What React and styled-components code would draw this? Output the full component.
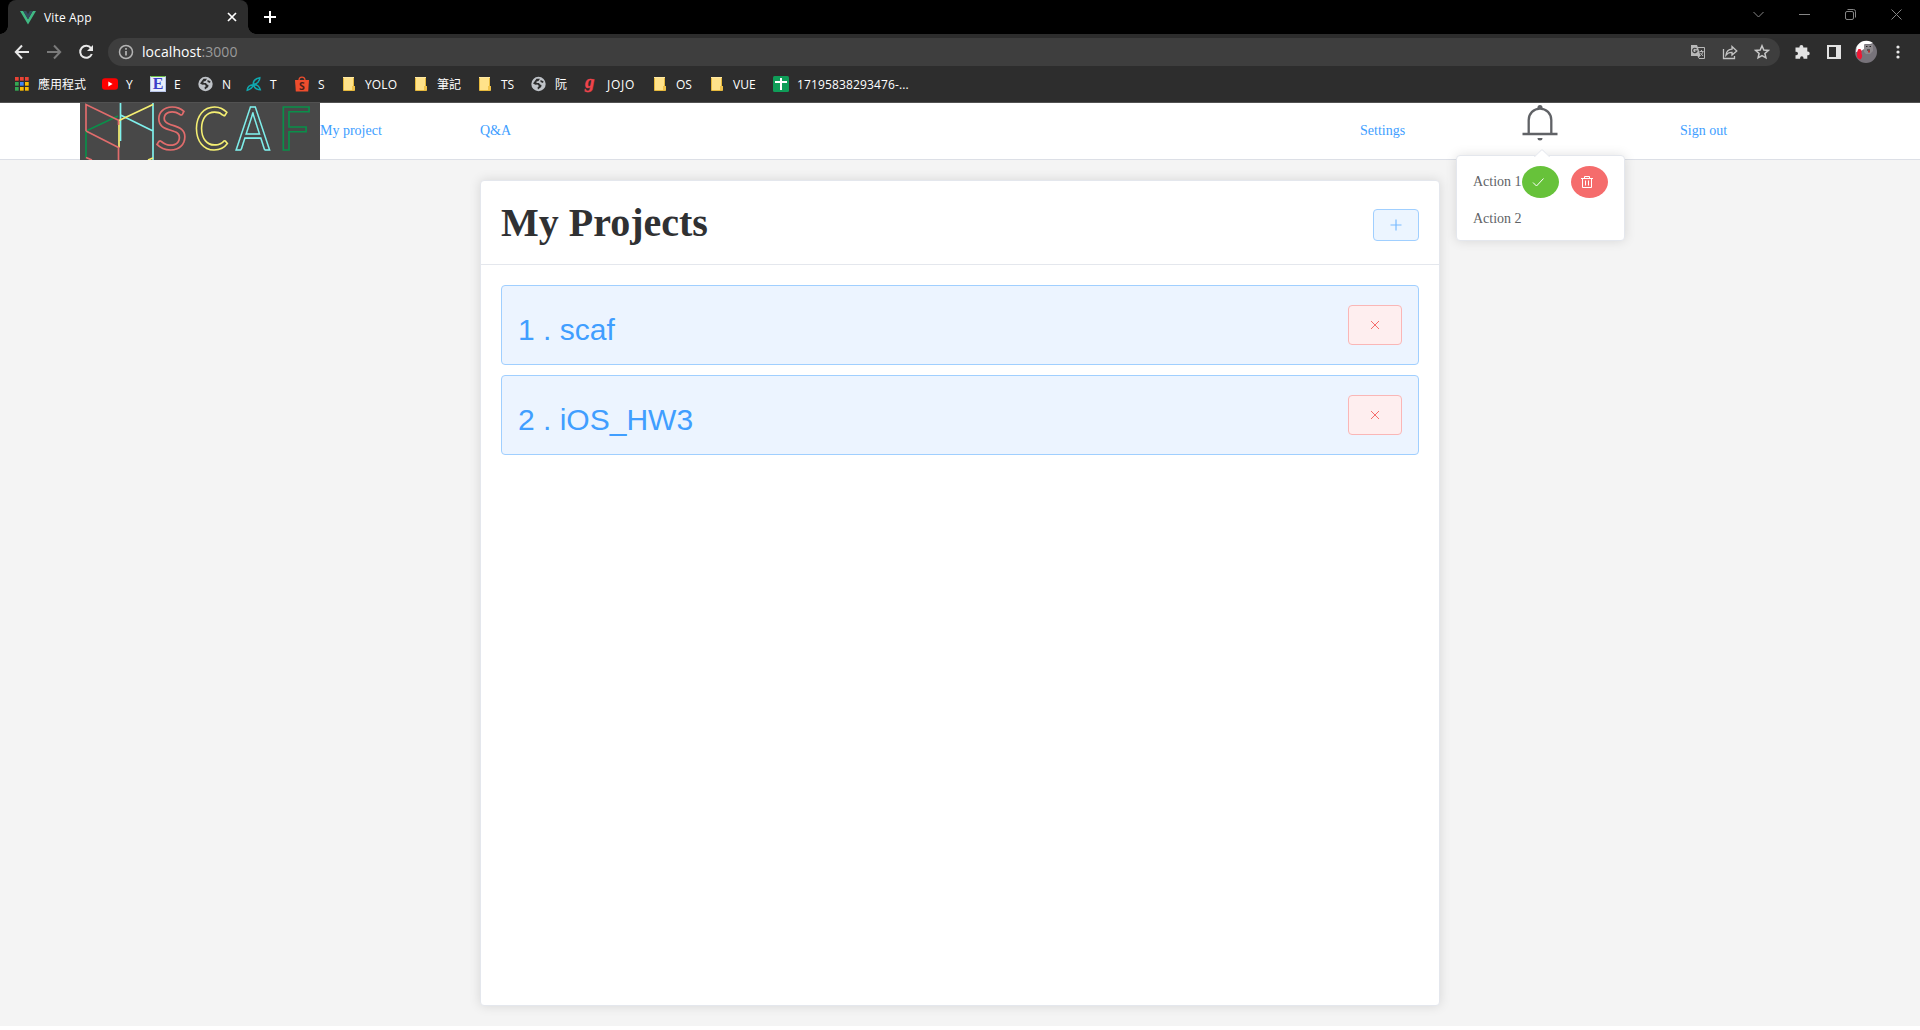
import React from "react";
import styled, { createGlobalStyle, css } from "styled-components";

const Global = createGlobalStyle`
  * { box-sizing: border-box; }
  body { margin: 0; background: #fff; overflow: hidden; }
  svg { display: block; flex: none; }
`;

const ui = css`
  font-family: "Open Sans", "Noto Sans", "Noto Sans CJK TC", sans-serif;
`;

/* ---------- browser chrome ---------- */
const Window = styled.div`
  width: 1920px;
  height: 1030px;
  display: flex;
  flex-direction: column;
`;
const TabStrip = styled.div`
  ${ui}
  height: 34px;
  flex: none;
  background: #000;
  display: flex;
  padding: 0 1px 0 8px;
`;
const Tab = styled.div`
  position: relative;
  width: 240px;
  height: 34px;
  border-radius: 8px 8px 0 0;
  background: #2d2d2d;
  color: #fff;
  font-size: 12px;
  display: flex;
  align-items: center;
  padding: 0 11px 0 12px;
  &::before, &::after {
    content: "";
    position: absolute;
    bottom: 0;
    width: 8px;
    height: 8px;
  }
  &::before { left: -8px; background: radial-gradient(circle at 0 0, transparent 7.5px, #2d2d2d 8px); }
  &::after { right: -8px; background: radial-gradient(circle at 100% 0, transparent 7.5px, #2d2d2d 8px); }
`;
const TabTitle = styled.span`
  flex: 1;
  margin-left: 8px;
  padding-top: 1px;
  letter-spacing: 0.15px;
`;
const NewTab = styled.div`
  margin: 11px 0 0 16px;
`;
const WindowButtons = styled.div`
  margin-left: auto;
  display: flex;
  height: 28px;
  align-items: center;
`;
const WindowButton = styled.div`
  width: 46px;
  display: flex;
  justify-content: center;
`;
const Toolbar = styled.div`
  ${ui}
  height: 34px;
  flex: none;
  background: #2d2d2d;
  display: flex;
  align-items: center;
  padding: 2px 14px 0;
`;
const NavIcons = styled.div`
  display: flex;
  gap: 16px;
  width: 94px;
`;
const Address = styled.div`
  flex: none;
  width: 1672px;
  height: 28px;
  border-radius: 14px;
  background: #3e3e3e;
  display: flex;
  align-items: center;
  padding: 0 10px 0 10px;
  color: #fff;
  font-size: 14px;
`;
const Url = styled.span`
  flex: 1;
  margin-left: 8px;
  padding-bottom: 1px;
  letter-spacing: 0.08px;
`;
const Port = styled.span`
  color: #9a9a9a;
`;
const AddressIcons = styled.div`
  display: flex;
  gap: 16px;
`;
const Extensions = styled.div`
  display: flex;
  align-items: center;
  padding-left: 14px;
`;
const ExtSlot = styled.div`
  width: ${(p) => p.$w}px;
  display: flex;
`;
const Bookmarks = styled.div`
  ${ui}
  height: 35px;
  flex: none;
  background: #2d2d2d;
  border-bottom: 1px solid #525252;
  display: flex;
  align-items: center;
  padding: 0 0 2px 14px;
`;
const Bookmark = styled.div`
  width: ${(p) => p.$w}px;
  height: 24px;
  flex: none;
  display: flex;
  align-items: center;
  gap: 8px;
  color: #fff;
  font-size: 12px;
  letter-spacing: ${(p) => p.$ls || 0}px;
  white-space: nowrap;
`;

/* ---------- page ---------- */
const Page = styled.div`
  flex: 1;
  display: flex;
  flex-direction: column;
  font-family: "Liberation Serif", serif;
`;
const NavBar = styled.nav`
  height: 57px;
  flex: none;
  border-bottom: 1px solid #dcdfe6;
  padding: 0 80px;
  display: grid;
  grid-template-columns: 240px 160px 880px 160px 160px 160px;
  font-size: 14px;
  color: #409eff;
`;
const NavLink = styled.a`
  line-height: 56px;
`;
const BellSlot = styled.div`
  position: relative;
`;
const BellIcon = styled.svg`
  margin-top: -1px;
`;
const Logo = styled.div`
  height: 57px;
  background: #484848;
  display: flex;
`;
const Word = styled.div`
  font-family: Lato, sans-serif;
  font-size: 60px;
  line-height: 48px;
  display: flex;
  color: #484848;
`;
const Letter = styled.span`
  width: ${(p) => p.$w}px;
  height: 48px;
  transform: scaleX(${(p) => p.$sx || 1});
  transform-origin: 0 0;
  -webkit-text-stroke: 1.7px ${(p) => p.$c};
`;
const Menu = styled.div`
  position: absolute;
  z-index: 2;
  left: -64px;
  top: 52px;
  width: 169px;
  height: 86px;
  background: #fff;
  border: 1px solid #e4e7ed;
  border-radius: 4px;
  box-shadow: 0 0 12px rgba(0, 0, 0, 0.12);
  color: #606266;
  padding: 7px 0 0 16px;
  &::before {
    content: "";
    position: absolute;
    left: 79px;
    top: -5px;
    width: 10px;
    height: 10px;
    background: #fff;
    transform: rotate(45deg);
    border: 1px solid #e4e7ed;
    border-color: #e4e7ed transparent transparent #e4e7ed;
    border-top-left-radius: 2px;
  }
`;
const MenuRow = styled.div`
  height: ${(p) => p.$h}px;
  display: flex;
  align-items: center;
  white-space: nowrap;
`;
const RowLabel = styled.span`
  width: 49px;
  padding-top: 1px;
`;
const RoundButton = styled.div`
  width: 37px;
  height: 32px;
  border-radius: 50%;
  background: ${(p) => p.$bg};
  margin-right: 12px;
  padding-left: 9px;
  display: flex;
  align-items: center;
`;
const Main = styled.main`
  height: 866px;
  flex: none;
  background: #f4f4f4;
  padding-top: 20px;
`;
const Card = styled.section`
  width: 960px;
  height: 826px;
  margin: 0 auto;
  background: #fff;
  border: 1px solid #e4e7ed;
  border-radius: 4px;
  box-shadow: 0 0 12px rgba(0, 0, 0, 0.12);
`;
const CardHeader = styled.header`
  height: 84px;
  padding: 0 20px;
  border-bottom: 1px solid #e4e7ed;
  display: flex;
  justify-content: space-between;
`;
const Title = styled.h1`
  margin: 19px 0 0;
  font-size: 40px;
  line-height: 46px;
  color: #303133;
`;
const AddButton = styled.div`
  width: 46px;
  height: 32px;
  margin-top: 28px;
  border: 1px solid #a0cfff;
  border-radius: 4px;
  background: #ecf5ff;
  display: flex;
  align-items: center;
  justify-content: center;
`;
const List = styled.div`
  padding: 20px;
  display: flex;
  flex-direction: column;
  gap: 10px;
`;
const Project = styled.div`
  height: 80px;
  border: 1px solid #a0cfff;
  border-radius: 4px;
  background: #ecf4ff;
  display: flex;
  justify-content: space-between;
  padding: 19px 16px 0 16px;
  font-family: "Liberation Sans", Arial, sans-serif;
  font-size: 30px;
  color: #409eff;
`;
const ProjectName = styled.span`
  line-height: 34px;
  padding-top: 8px;
`;
const DeleteButton = styled.div`
  width: 54px;
  height: 40px;
  border: 1px solid #fab6b6;
  border-radius: 4px;
  background: #feeeef;
  display: flex;
  align-items: center;
  justify-content: center;
`;

/* ---------- icons ---------- */
const Folder = () => (
  <svg width="16" height="16">
    <path d="M2.5 1.5h10v9h1v4h-11z" fill="#ffe28a" stroke="#e6b93c" />
    <path d="M2 1h11v1H2z" fill="#ffe9a3" />
    <path d="M11 10h3v4h-3z" fill="#f0c24b" />
  </svg>
);
const Globe = () => (
  <svg width="16" height="16">
    <circle cx="7.500" cy="8" r="7.200" fill="#bfc3c8" />
    <path d="M2 7.500l3.500-4.800h3.500l-1.500 2.300-2 .5v1.500H8l1 1.500 1.500.5-.3 2-3.200 2.500-.5-2 1.500-1.500-1.500-1.500-2 .3z" fill="#2d2d2d" />
    <path d="M9.500 4l3 1.200-.5 1.800-2.500-1z" fill="#2d2d2d" />
  </svg>
);
const APPS = ["#ea4335", "#ea4335", "#ea4335", "#34a853", "#4285f4", "#fbbc04", "#34a853", "#fbbc04", "#fbbc04"];
const Apps = () => (
  <svg width="16" height="16">
    {APPS.map((c, i) => (
      <rect key={i} x={1 + (i % 3) * 5} y={1 + Math.floor(i / 3) * 5} width="3.700" height="3.700" fill={c} />
    ))}
  </svg>
);
const YouTube = () => (
  <svg width="16" height="16">
    <rect y="2.300" width="16" height="11.400" rx="3" fill="#f00" />
    <path d="M6.300 5.500v5l4.300-2.500z" fill="#fff" />
  </svg>
);
const Squares = styled.span`
  width: 16px;
  height: 16px;
  flex: none;
  display: block;
  text-align: center;
  letter-spacing: 0;
  background: #e7effb;
  border: 1px solid #b8c4e8;
  border-top-color: #69bd45;
  color: #3b3ec8;
  font: bold 16px/14px "Liberation Serif", serif;
`;
const Branch = () => (
  <svg width="16" height="16" fill="none" stroke="#10a7ae" strokeWidth="1.500">
    <path d="M7.300 8.500C7 5 9.500 2.500 13.800 1.700 14 5 11 8 7.300 8.500zM7.300 8.800C6.500 11.800 4 13.500 1.200 14.200 1.500 11 4 9 7.300 8.800zM7.500 8.800c3.500-.3 6 2 6.800 5-3.500 0-6-1.800-6.800-5z" />
  </svg>
);
const Shop = () => (
  <svg width="16" height="16">
    <path d="M1 4h14l-.8 11.500H1.800z" fill="#ee4d2d" />
    <path d="M5 4.300C5 0 11 0 11 4.300" fill="none" stroke="#ee4d2d" strokeWidth="1.300" />
    <text x="8" y="13.500" fontSize="10.500" fontWeight="bold" textAnchor="middle" fill="#4b211a">S</text>
  </svg>
);
const Script = styled.span`
  width: 16px;
  height: 16px;
  flex: none;
  color: #f0444c;
  font: italic bold 19px/11px "Liberation Serif", serif;
  -webkit-text-stroke: 0.4px #f0444c;
  padding-left: 2px;
`;
const Sheet = () => (
  <svg width="16" height="16">
    <rect width="16" height="16" rx="1.500" fill="#0f9d58" />
    <path d="M2 5h12v2H2zM7 2h2v12H7z" fill="#fff" />
  </svg>
);

const BOOKMARKS = [
  [<Apps />, "應用程式", 88],
  [<YouTube />, "Y", 48],
  [<Squares>E</Squares>, "E", 48],
  [<Globe />, "N", 48],
  [<Branch />, "T", 48],
  [<Shop />, "S", 47],
  [<Folder />, "YOLO", 72, 0.15],
  [<Folder />, "筆記", 64],
  [<Folder />, "TS", 54],
  [<Globe />, "阮", 52],
  [<Script>g</Script>, "JOJO", 69, 0.7],
  [<Folder />, "OS", 57],
  [<Folder />, "VUE", 64],
  [<Sheet />, "17195838293476-...", 140, 0.14],
];
const PROJECTS = ["scaf", "iOS_HW3"];

const Chrome = () => (
  <>
    <TabStrip>
      <Tab>
        <svg width="16" height="16">
          <path d="M0 2h3.200L8 10.300 12.800 2H16L8 15.500z" fill="#41b883" />
          <path d="M3.200 2h3L8 5.200 9.800 2h3L8 10.300z" fill="#35495e" />
        </svg>
        <TabTitle>Vite App</TabTitle>
        <svg width="10" height="10" stroke="#fff" strokeWidth="1.700">
          <path d="M1 1l8 8M9 1l-8 8" />
        </svg>
      </Tab>
      <NewTab>
        <svg width="12" height="12" stroke="#fff" strokeWidth="2">
          <path d="M6 0v12M0 6h12" />
        </svg>
      </NewTab>
      <WindowButtons>
        <WindowButton>
          <svg width="11" height="11" fill="none" stroke="#858585"><path d="M.5 3l5 5 5-5" /></svg>
        </WindowButton>
        <WindowButton>
          <svg width="11" height="11" fill="none" stroke="#858585"><path d="M0 5.500h11" /></svg>
        </WindowButton>
        <WindowButton>
          <svg width="11" height="11" fill="none" stroke="#858585">
            <rect x=".5" y="2.500" width="8" height="8" rx="1.500" />
            <path d="M2.500.5h6a2 2 0 0 1 2 2v6" />
          </svg>
        </WindowButton>
        <WindowButton>
          <svg width="11" height="11" fill="none" stroke="#858585"><path d="M.5.5l10 10M10.500.5l-10 10" /></svg>
        </WindowButton>
      </WindowButtons>
    </TabStrip>
    <Toolbar>
      <NavIcons>
        <svg width="16" height="16" fill="none" stroke="#e8e8e8" strokeWidth="2"><path d="M15 8H2M8 1.500L1.800 8 8 14.500" /></svg>
        <svg width="16" height="16" fill="none" stroke="#7a7a7a" strokeWidth="2"><path d="M1 8h13M8 1.500L14.200 8 8 14.500" /></svg>
        <svg width="16" height="16" fill="none" stroke="#e8e8e8" strokeWidth="2">
          <path d="M13 4.200A6 6 0 1 0 13.800 10" />
          <path d="M15 1v6H9z" fill="#e8e8e8" stroke="none" />
        </svg>
      </NavIcons>
      <Address>
        <svg width="16" height="16" fill="none" stroke="#b4b4b4" strokeWidth="1.500">
          <circle cx="8" cy="8" r="6.500" />
          <path d="M8 7v4.500M8 4v1.700" strokeWidth="1.700" />
        </svg>
        <Url>localhost<Port>:3000</Port></Url>
        <AddressIcons>
          <svg width="16" height="16">
            <path d="M7.500 3.500h7v11H9" fill="none" stroke="#b8b8b8" />
            <path d="M1 1h6l1 2.500 2.500 8.500H1z" fill="#b8b8b8" />
            <path d="M10 12l-1.500 2.500L7.500 12z" fill="#b8b8b8" />
            <path d="M6.500 5A2.200 2.200 0 1 0 7 7H5" fill="none" stroke="#3e3e3e" strokeWidth="1.200" />
            <path d="M9.500 7.500h4M11.500 6v1.500M13 7.500c-.5 2-1.500 3-2.500 4M10.500 9l2.500 3" fill="none" stroke="#b8b8b8" />
          </svg>
          <svg width="16" height="16" fill="none" stroke="#c4c4c4" strokeWidth="1.300">
            <path d="M1.500 5v9.500h11V12" />
            <path d="M4 11c.5-4 2.500-5.500 6-5.800V2.500L14.800 7 10 11V8.300C7.500 8.200 5.500 9 4 11z" />
          </svg>
          <svg width="16" height="16" fill="none" stroke="#c8c8c8" strokeWidth="1.500">
            <path d="M8 1.800l1.800 4.200 4.500.4-3.400 3 1 4.400L8 11.500l-3.900 2.300 1-4.400-3.400-3 4.500-.4z" />
          </svg>
        </AddressIcons>
      </Address>
      <Extensions>
        <ExtSlot $w={32}>
          <svg width="16" height="16"><path d="M1.500 3.500h4V2.800a1.900 1.900 0 0 1 3.800 0v.7h4v4h.5a1.900 1.900 0 0 1 0 3.800h-.5v3.500H9.500v-.8a1.700 1.700 0 0 0-3.400 0v.8H1.500v-3.500h.7a1.800 1.800 0 0 0 0-3.600h-.7z" fill="#e2e2e2" /></svg>
        </ExtSlot>
        <ExtSlot $w={28}>
          <svg width="16" height="16"><path fillRule="evenodd" d="M1 1h14v14H1zM3 3v10h7V3z" fill="#e2e2e2" /></svg>
        </ExtSlot>
        <ExtSlot $w={42}>
          <svg width="24" height="24" viewBox="0 0 24 24">
            <circle cx="12" cy="12" r="11" fill="#77737a" />
            <path d="M2.500 7A11 11 0 0 1 19 3L16 4h-5l-1 5-3 2-5 1z" fill="#fff" />
            <path d="M10 4l2 1h5l2-1v7l-3 3h-4l-2-2z" fill="#8d898d" />
            <path d="M12 6.500h1.500M15.500 6.500H17M13 10h3" stroke="#222" />
            <path d="M14 10.500h2v2h-2z" fill="#a33" />
            <path d="M4 9.500c3-1.500 4 1 3.500 4 1 2 1 4-1 6L3.500 18c-1-3-.5-6 .5-8.500z" fill="#ee1834" />
          </svg>
        </ExtSlot>
        <svg width="4" height="16" fill="#e8e8e8">
          <circle cx="2" cy="3" r="1.600" /><circle cx="2" cy="8" r="1.600" /><circle cx="2" cy="13" r="1.600" />
        </svg>
      </Extensions>
    </Toolbar>
    <Bookmarks>
      {BOOKMARKS.map(([icon, label, w, ls], i) => (
        <Bookmark key={i} $w={w} $ls={ls}>{icon}<span>{label}</span></Bookmark>
      ))}
    </Bookmarks>
  </>
);

const ScafLogo = () => (
  <Logo>
    <svg width="75" height="57" fill="none" strokeWidth="1.700">
      <path d="M6 28L38 13M6 28v27" stroke="#0a8f4a" />
      <path d="M40.500 0v38M73 0v57M40.500 12L73 28" stroke="#7ff0ec" />
      <path d="M73 1.500L39 17.500v27M73 55l-5 2" stroke="#f5ef72" />
      <path d="M6 28V1.500l33 16M6 28l32.500 16.500V57M38.500 18v4M6 54.500l6 2.500" stroke="#e06c6c" />
    </svg>
    <Word>
      <Letter $w={39} $c="#e06c6c">S</Letter>
      <Letter $w={42} $c="#f5ef72" $sx={0.86}>C</Letter>
      <Letter $w={42} $c="#7ff0ec" $sx={0.83}>A</Letter>
      <Letter $w={35} $c="#0a8f4a" $sx={0.97}>F</Letter>
    </Word>
  </Logo>
);

const NotificationMenu = () => (
  <Menu>
    <MenuRow $h={37}>
      <RowLabel>Action 1</RowLabel>
      <RoundButton $bg="#67c23a">
        <svg width="14" height="14" fill="none" stroke="#fff"><path d="M2 7.500l3.500 3.500 7-7.500" /></svg>
      </RoundButton>
      <RoundButton $bg="#f56c6c">
        <svg width="14" height="14" fill="none" stroke="#fff">
          <path d="M1 3.500h12M2.500 3.500v9h9v-9M4.500 3.500v-2h5v2M5.500 5.500v5M8.500 5.500v5" />
        </svg>
      </RoundButton>
    </MenuRow>
    <MenuRow $h={37}><RowLabel>Action 2</RowLabel></MenuRow>
  </Menu>
);

export default function App() {
  return (
    <Window>
      <Global />
      <Chrome />
      <Page>
        <NavBar>
          <ScafLogo />
          <NavLink>My project</NavLink>
          <NavLink>Q&amp;A</NavLink>
          <NavLink>Settings</NavLink>
          <BellSlot>
            <BellIcon width="40" height="40" fill="none" stroke="#606266" strokeWidth="2.300">
              <path d="M2.500 32h35M8.700 32V17.900a11.300 11.300 0 0 1 22.600 0V32" />
              <path d="M17.500 7V5.500a2.500 2.500 0 0 1 5 0V7zM17.500 36h5a2.500 2.500 0 0 1-5 0z" fill="#606266" stroke="none" />
            </BellIcon>
            <NotificationMenu />
          </BellSlot>
          <NavLink>Sign out</NavLink>
        </NavBar>
        <Main>
          <Card>
            <CardHeader>
              <Title>My Projects</Title>
              <AddButton>
                <svg width="14" height="14" stroke="#79bbff" strokeWidth="1.200"><path d="M7 1.500v11M1.500 7h11" /></svg>
              </AddButton>
            </CardHeader>
            <List>
              {PROJECTS.map((name, i) => (
                <Project key={name}>
                  <ProjectName>{i + 1} . {name}</ProjectName>
                  <DeleteButton>
                    <svg width="10" height="10" stroke="#f56c6c"><path d="M1 1l8 8M9 1L1 9" /></svg>
                  </DeleteButton>
                </Project>
              ))}
            </List>
          </Card>
        </Main>
      </Page>
    </Window>
  );
}
